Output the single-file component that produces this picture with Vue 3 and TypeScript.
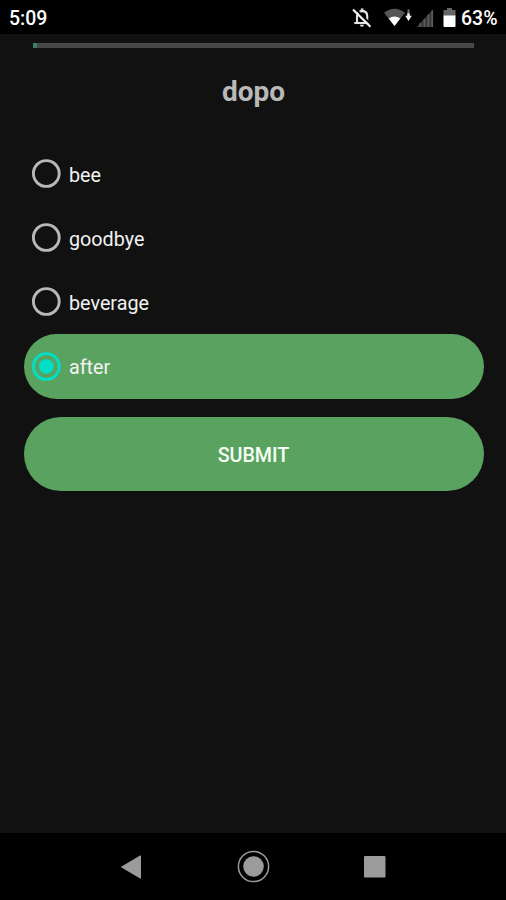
<script setup lang="ts">
import { ref } from 'vue'

const word = 'dopo'
const answers: string[] = ['bee', 'goodbye', 'beverage', 'after']
const selected = ref('after')
const progress = 1
</script>

<template>
  <div class="screen">
    <header class="status">
      <span class="clock">5:09</span>
      <svg class="status-icons" viewBox="350 0 110 34" width="110" height="34">
        <g fill="none" stroke="#e4e4e4" stroke-width="2.1">
          <path d="M357 22.6V16c0-3 2-4.900 5.100-4.900s5.100 1.900 5.100 4.900v6.600" />
          <path d="M354.300 23h15.400" />
        </g>
        <path d="M360.800 8.600h2.600v2.700h-2.600zM359.900 24.700h4a2 2 0 0 1-4 0z" fill="#e4e4e4" />
        <path d="M354.800 8.200l17.200 17.300" stroke="#000" stroke-width="1.800" />
        <path d="M353 9.500l17.400 17.200" stroke="#f2f2f2" stroke-width="2.200" />
        <path d="M384 12.700Q394.500 4.600 405 12.700L394.500 26z" fill="#555" />
        <path d="M388.700 18.400Q394.500 14.600 400.300 18.400L394.500 26z" fill="#fff" />
        <path d="M408.500 9.500v5" stroke="#777" stroke-width="2" />
        <path d="M407.200 13.500h2.600v2.200h2l-3.300 5.200-3.300-5.200h2z" fill="#f2f2f2" />
        <path d="M433 9.500V27H416.500z" fill="#383838" />
        <path d="M420.400 23v4M424.400 19v8M428.400 14.500V27M432.200 10.500V27" stroke="#5c5c5c" stroke-width="1.700" />
        <path d="M447 8h5v2h3.500v6h-12v-6h3.500z" fill="#666" />
        <path d="M443.500 15.500h12V26q0 1-1 1h-10q-1 0-1-1z" fill="#fff" />
      </svg>
      <span class="percent">63%</span>
    </header>

    <main class="quiz">
      <div class="track"><div class="fill" :style="{ width: progress + '%' }"></div></div>
      <h1 class="word">{{ word }}</h1>
      <div class="answers" role="radiogroup">
        <div
          v-for="answer in answers"
          :key="answer"
          class="answer"
          :class="{ chosen: answer === selected }"
          role="radio"
          :aria-checked="answer === selected"
          @click="selected = answer"
        >
          <svg class="radio" viewBox="0 0 30 30" width="30" height="30">
            <circle cx="15.300" cy="14.500" r="12.900" fill="none" stroke="currentColor" stroke-width="2.900" />
            <circle v-if="answer === selected" cx="15.300" cy="14.500" r="7.300" fill="currentColor" />
          </svg>
          <span>{{ answer }}</span>
        </div>
      </div>
      <button class="submit">SUBMIT</button>
    </main>

    <nav class="navbar">
      <svg viewBox="0 0 22 26" width="22" height="26">
        <path d="M1.500 13L20.500 1.800V24.200z" fill="#9b9b9b" stroke="#9b9b9b" stroke-linejoin="round" />
      </svg>
      <svg viewBox="0 0 34 34" width="34" height="34">
        <circle cx="17.500" cy="16.500" r="15.100" fill="none" stroke="#9b9b9b" stroke-width="1.500" />
        <circle cx="17.500" cy="16.500" r="10.300" fill="#9b9b9b" />
      </svg>
      <svg viewBox="0 0 22 22" width="22" height="22">
        <rect width="21.500" height="21.500" rx="1" fill="#9b9b9b" />
      </svg>
    </nav>
  </div>
</template>

<style>
body {
  background: #000;
}
</style>

<style scoped>
.screen {
  display: flex;
  flex-direction: column;
  height: 100vh;
  background: #111;
  color: #f2f2f2;
  font-family: Roboto, sans-serif;
}
.status {
  display: flex;
  align-items: center;
  height: 34px;
  padding: 0 8px 0 9px;
  background: #000;
  color: #fff;
  font-size: 19.500px;
  font-weight: 500;
  line-height: 36px;
}
.status-icons {
  margin-left: auto;
}
.percent {
  width: 37px;
  margin-left: 1px;
  white-space: nowrap;
}
.clock,
.percent {
  padding-top: 4px;
}
.quiz {
  display: flex;
  flex: 1;
  flex-direction: column;
  padding: 8.500px 22.500px 0 23.500px;
}
.track {
  height: 5.500px;
  margin: 0 9.500px;
  background: #484848;
}
.fill {
  height: 100%;
  background: #3a7d69;
}
.word {
  margin: 26px 0 32px;
  color: #b9b9b9;
  font-size: 28px;
  font-weight: 700;
  line-height: 36px;
  text-align: center;
}
.answers {
  display: flex;
  flex-direction: column;
}
.answer {
  display: flex;
  align-items: center;
  gap: 8px;
  box-sizing: border-box;
  height: 64px;
  padding: 0 7.500px;
  border-radius: 33px;
  font-size: 19.750px;
  line-height: 26px;
}
.answer span {
  padding-top: 3px;
}
.radio {
  color: #b8b8b8;
}
.chosen {
  height: 65px;
  background: #5aa260;
}
.chosen .radio {
  color: #00dfc8;
}
.submit {
  height: 73.500px;
  margin-top: 18px;
  padding: 4px 0 0;
  border: 0;
  border-radius: 37px;
  background: #5aa260;
  color: #f5fff5;
  font: 500 19.700px Roboto, sans-serif;
}
.navbar {
  display: flex;
  align-items: center;
  justify-content: space-between;
  box-sizing: border-box;
  height: 67px;
  padding: 0 120px;
  background: #000;
}
</style>
